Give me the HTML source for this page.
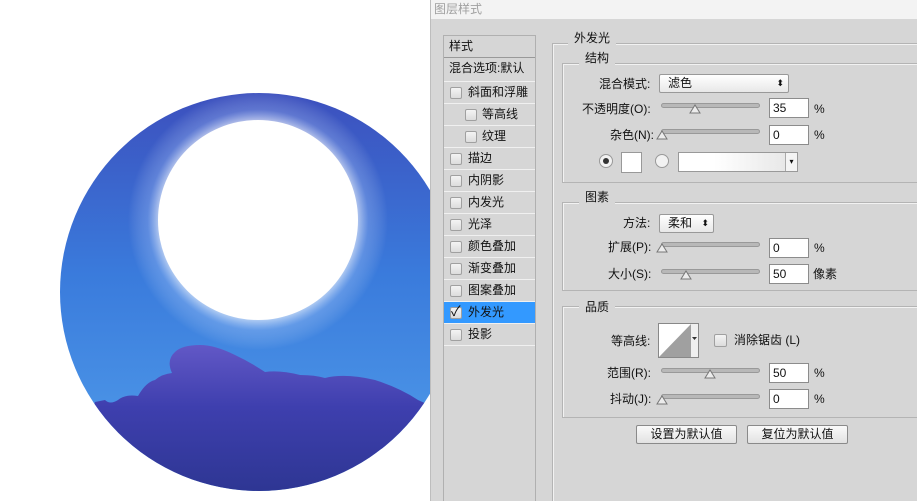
<!DOCTYPE html>
<html><head><meta charset="utf-8"><style>
*{margin:0;padding:0;box-sizing:border-box}
html,body{width:917px;height:501px;overflow:hidden}
body{background:#fff;position:relative;font-family:"Liberation Sans","Noto Sans CJK SC",sans-serif;font-size:12px;color:#111}
.a{position:absolute}
.t{position:absolute;white-space:nowrap;line-height:14px}
.gb{position:absolute;border:1px solid #b4b4b4;border-right:none;box-shadow:1px 1px 0 #f2f2f2 inset}
.lbl{position:absolute;background:#d6d6d6;padding:0 6px;line-height:14px}
.row{position:absolute;left:444px;width:91px;height:22px;border-bottom:1px solid #f0f0f0;line-height:21px}
.cb{position:absolute;width:12px;height:12px;border:1px solid #a0a0a0;border-radius:2px;background:linear-gradient(#f4f4f4,#dcdcdc)}
.trk{position:absolute;height:5px;width:99px;border-radius:3px;background:#b8b8b8;border:1px solid #999}
.inp{position:absolute;width:40px;height:20px;background:#fff;border:1px solid #8c8c8c;padding-left:3px;line-height:18px}
.sel{position:absolute;height:19px;border:1px solid #999;border-radius:2px;background:linear-gradient(#fff,#e8e8e8);line-height:17px;padding-left:8px}
.btn{position:absolute;height:19px;border:1px solid #8a8a8a;border-radius:2px;background:linear-gradient(#fafafa,#e2e2e2);text-align:center;line-height:17px}
</style></head><body>
<svg class="a" style="left:0;top:0" width="440" height="501">
<defs>
<linearGradient id="sky" x1="0" y1="0" x2="0" y2="1">
<stop offset="0" stop-color="#3c4fbd"/><stop offset="0.45" stop-color="#3a7bdc"/><stop offset="0.8" stop-color="#4a93e6"/></linearGradient>
<linearGradient id="cl" x1="0" y1="0" x2="0" y2="1">
<stop offset="0" stop-color="#6258c6"/><stop offset="0.4" stop-color="#3e3fae"/><stop offset="1" stop-color="#2c3590"/></linearGradient>
<radialGradient id="glow" cx="258" cy="220" r="130" gradientUnits="userSpaceOnUse">
<stop offset="0.75" stop-color="#fff" stop-opacity="0.7"/><stop offset="0.85" stop-color="#c8dcff" stop-opacity="0.25"/><stop offset="1" stop-color="#fff" stop-opacity="0"/></radialGradient>
<clipPath id="c"><circle cx="259" cy="292" r="199"/></clipPath>
</defs>
<g clip-path="url(#c)">
<rect x="0" y="90" width="440" height="410" fill="url(#sky)"/>
<circle cx="258" cy="220" r="130" fill="url(#glow)"/>
<circle cx="258" cy="220" r="100" fill="#fff"/>
<path d="M95 402 L105 400 Q110 405 118 400 Q125 394 138 396 Q146 382 155 380 Q162 374 172 373 Q166 360 175 352 Q182 345 200 345 Q215 345 235 355 Q250 362 265 372 Q280 370 300 375 Q315 375 325 378 Q345 373 375 380 Q400 388 418 400 L440 410 L440 501 L60 501 Z" fill="url(#cl)"/>
</g>
</svg>
<div class="a" style="left:430px;top:0;width:487px;height:501px;background:#d6d6d6;border-left:1px solid #bdbdbd"></div>
<div class="a" style="left:431px;top:0;width:486px;height:19px;background:#f3f3f3"></div>
<div class="t" style="left:434px;top:2px;color:#a0a0a0">图层样式</div>
<div class="a" style="left:443px;top:35px;width:93px;height:466px;border:1px solid #b0b0b0;border-bottom:none"></div>
<div class="row" style="top:36px;height:22px;border-bottom:1px solid #999"><span style="margin-left:5px">样式</span></div>
<div class="row" style="top:58px;height:24px"><span style="margin-left:5px">混合选项:默认</span></div>
<div class="row" style="top:82px"><div class="cb" style="left:6px;top:5px"></div><span style="margin-left:24px">斜面和浮雕</span></div>
<div class="row" style="top:104px"><div class="cb" style="left:21px;top:5px"></div><span style="margin-left:38px">等高线</span></div>
<div class="row" style="top:126px"><div class="cb" style="left:21px;top:5px"></div><span style="margin-left:38px">纹理</span></div>
<div class="row" style="top:148px"><div class="cb" style="left:6px;top:5px"></div><span style="margin-left:24px">描边</span></div>
<div class="row" style="top:170px"><div class="cb" style="left:6px;top:5px"></div><span style="margin-left:24px">内阴影</span></div>
<div class="row" style="top:192px"><div class="cb" style="left:6px;top:5px"></div><span style="margin-left:24px">内发光</span></div>
<div class="row" style="top:214px"><div class="cb" style="left:6px;top:5px"></div><span style="margin-left:24px">光泽</span></div>
<div class="row" style="top:236px"><div class="cb" style="left:6px;top:5px"></div><span style="margin-left:24px">颜色叠加</span></div>
<div class="row" style="top:258px"><div class="cb" style="left:6px;top:5px"></div><span style="margin-left:24px">渐变叠加</span></div>
<div class="row" style="top:280px"><div class="cb" style="left:6px;top:5px"></div><span style="margin-left:24px">图案叠加</span></div>
<div class="row" style="top:302px;background:#3399ff"><div class="cb" style="left:6px;top:5px"></div><span class="t" style="left:7px;top:2px;font-size:14px">✓</span><span style="margin-left:24px">外发光</span></div>
<div class="row" style="top:324px"><div class="cb" style="left:6px;top:5px"></div><span style="margin-left:24px">投影</span></div>
<div class="gb" style="left:552px;top:43px;width:365px;height:458px;border-bottom:none"></div>
<div class="lbl" style="left:568px;top:31px">外发光</div>
<div class="gb" style="left:562px;top:63px;width:355px;height:120px"></div>
<div class="lbl" style="left:579px;top:51px">结构</div>
<div class="t" style="left:599px;top:77px">混合模式:</div>
<div class="sel" style="left:659px;top:74px;width:130px">滤色<span class="a" style="right:4px;top:0;font-size:9px">⬍</span></div>
<div class="t" style="left:582px;top:102px">不透明度(O):</div>
<div class="trk" style="left:661px;top:103px"></div>
<svg class="a" style="left:689px;top:104px" width="12" height="10"><path d="M1 9 L6 1 L11 9 Z" fill="#ececec" stroke="#777"/></svg>
<div class="inp" style="left:769px;top:98px">35</div><div class="t" style="left:814px;top:102px">%</div>
<div class="t" style="left:610px;top:128px">杂色(N):</div>
<div class="trk" style="left:661px;top:129px"></div>
<svg class="a" style="left:656px;top:130px" width="12" height="10"><path d="M1 9 L6 1 L11 9 Z" fill="#ececec" stroke="#777"/></svg>
<div class="inp" style="left:769px;top:125px">0</div><div class="t" style="left:814px;top:128px">%</div>
<div class="a" style="left:599px;top:154px;width:14px;height:14px;border-radius:50%;border:1px solid #999;background:#f2f2f2"></div>
<div class="a" style="left:603px;top:158px;width:6px;height:6px;border-radius:50%;background:#333"></div>
<div class="a" style="left:621px;top:152px;width:21px;height:21px;background:#fff;border:1px solid #999"></div>
<div class="a" style="left:655px;top:154px;width:14px;height:14px;border-radius:50%;border:1px solid #999;background:#f2f2f2"></div>
<div class="a" style="left:678px;top:152px;width:120px;height:20px;border:1px solid #999;background:linear-gradient(90deg,#fff 30%,#e4e4e4)"></div>
<div class="a" style="left:785px;top:153px;width:12px;height:18px;border-left:1px solid #aaa;background:#f4f4f4;font-size:8px;text-align:center;line-height:18px">▾</div>
<div class="gb" style="left:562px;top:202px;width:355px;height:89px"></div>
<div class="lbl" style="left:579px;top:190px">图素</div>
<div class="t" style="left:623px;top:216px">方法:</div>
<div class="sel" style="left:659px;top:214px;width:55px">柔和<span class="a" style="right:4px;top:0;font-size:9px">⬍</span></div>
<div class="t" style="left:608px;top:240px">扩展(P):</div>
<div class="trk" style="left:661px;top:242px"></div>
<svg class="a" style="left:656px;top:243px" width="12" height="10"><path d="M1 9 L6 1 L11 9 Z" fill="#ececec" stroke="#777"/></svg>
<div class="inp" style="left:769px;top:238px">0</div><div class="t" style="left:814px;top:241px">%</div>
<div class="t" style="left:608px;top:267px">大小(S):</div>
<div class="trk" style="left:661px;top:269px"></div>
<svg class="a" style="left:680px;top:270px" width="12" height="10"><path d="M1 9 L6 1 L11 9 Z" fill="#ececec" stroke="#777"/></svg>
<div class="inp" style="left:769px;top:264px">50</div><div class="t" style="left:813px;top:267px">像素</div>
<div class="gb" style="left:562px;top:306px;width:355px;height:112px"></div>
<div class="lbl" style="left:579px;top:300px">品质</div>
<div class="t" style="left:611px;top:334px">等高线:</div>
<svg class="a" style="left:658px;top:323px" width="41" height="35"><rect x="0.5" y="0.5" width="40" height="34" fill="#fff" stroke="#888"/><path d="M1 34 L33 1 L33 34 Z" fill="#a0a0a0"/><rect x="33" y="1" width="7" height="33" fill="#f0f0f0"/><path d="M34 14 L39 14 L36.5 17 Z" fill="#333"/></svg>
<div class="cb" style="left:714px;top:334px;width:13px;height:13px"></div>
<div class="t" style="left:734px;top:333px">消除锯齿 (L)</div>
<div class="t" style="left:607px;top:366px">范围(R):</div>
<div class="trk" style="left:661px;top:368px"></div>
<svg class="a" style="left:704px;top:369px" width="12" height="10"><path d="M1 9 L6 1 L11 9 Z" fill="#ececec" stroke="#777"/></svg>
<div class="inp" style="left:769px;top:363px">50</div><div class="t" style="left:814px;top:366px">%</div>
<div class="t" style="left:610px;top:392px">抖动(J):</div>
<div class="trk" style="left:661px;top:394px"></div>
<svg class="a" style="left:656px;top:395px" width="12" height="10"><path d="M1 9 L6 1 L11 9 Z" fill="#ececec" stroke="#777"/></svg>
<div class="inp" style="left:769px;top:389px">0</div><div class="t" style="left:814px;top:392px">%</div>
<div class="btn" style="left:636px;top:425px;width:101px">设置为默认值</div>
<div class="btn" style="left:747px;top:425px;width:101px">复位为默认值</div>
</body></html>
